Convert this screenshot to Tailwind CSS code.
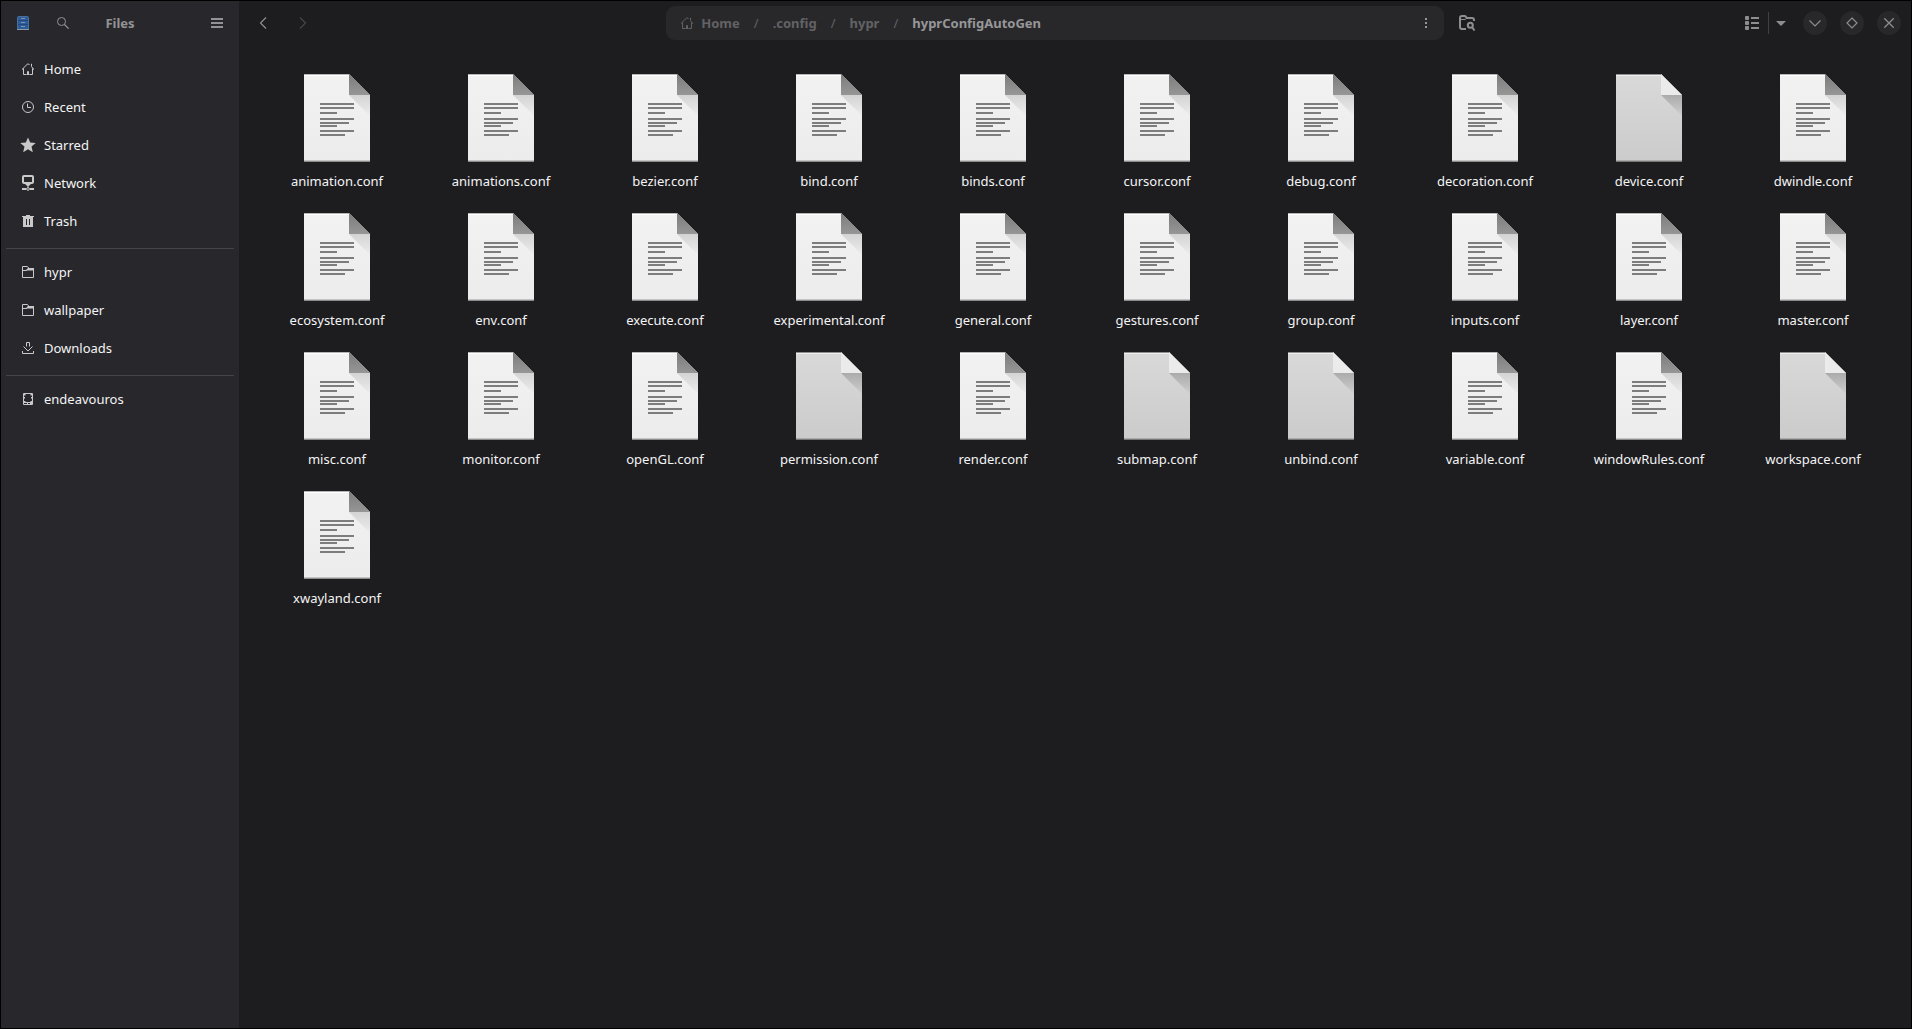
<!DOCTYPE html>
<html lang="en">
<head>
<meta charset="utf-8">
<title>Files</title>
<meta name="viewport" content="width=device-width, initial-scale=1">
<script src="https://cdn.jsdelivr.net/npm/@tailwindcss/browser@4"></script>
</head>
<body class="bg-[#1d1d20] font-['Noto_Sans',sans-serif] text-[13px] leading-5 text-white">

<svg class="absolute size-0" aria-hidden="true">
  <defs>
    <linearGradient id="paper" x1="0" y1="0" x2="0" y2="1"><stop offset="0" stop-color="#f2f2f2"/><stop offset="1" stop-color="#ececec"/></linearGradient>
    <linearGradient id="fold" x1="0" y1="0" x2="0" y2="1"><stop offset="0" stop-color="#7c7c7c"/><stop offset="1" stop-color="#969696"/></linearGradient>
    <linearGradient id="shade" x1="0" y1="0" x2="0" y2="1"><stop offset="0" stop-color="#000" stop-opacity=".12"/><stop offset="1" stop-color="#000" stop-opacity=".01"/></linearGradient>
    <linearGradient id="blank-paper" x1="0" y1="0" x2="0" y2="1"><stop offset="0" stop-color="#d9d9d9"/><stop offset="1" stop-color="#cbcbcb"/></linearGradient>
    <linearGradient id="blank-shade" x1="0" y1="0" x2="0" y2="1"><stop offset="0" stop-color="#000" stop-opacity=".2"/><stop offset="1" stop-color="#000" stop-opacity=".02"/></linearGradient>
    <symbol id="doc-text" viewBox="0 0 66 88">
      <path d="M0 0H45L66 21V88H0Z" fill="url(#paper)"/>
      <path d="M0 0H45V1H0Z" fill="#b5b5b5"/><path d="M0 1H45V2H0Z" fill="#fff"/>
      <path d="M0 86H66V87H0Z" fill="#c4c4c4"/><path d="M0 87H66V88H0Z" fill="#8c8c8c"/>
      <path d="M45 21H66V42Z" fill="url(#shade)"/>
      <path d="M45 0L66 21H45Z" fill="url(#fold)"/>
      <path d="M16 29h34v2H16zM16 33h34v2H16zM16 38h17v2H16zM16 44h34v2H16zM16 48h29v2H16zM16 51h17v2H16zM16 56h34v2H16zM16 60h25v2H16z" fill="#7d7d7d"/>
    </symbol>
    <symbol id="doc-blank" viewBox="0 0 66 88">
      <path d="M0 0H45L66 21V88H0Z" fill="url(#blank-paper)"/>
      <path d="M0 0H45V1H0Z" fill="#8e8e8e"/><path d="M0 1H45V2H0Z" fill="#efefef"/>
      <path d="M0 86H66V87H0Z" fill="#aaa"/><path d="M0 87H66V88H0Z" fill="#777"/>
      <path d="M45 21H66V42Z" fill="url(#blank-shade)"/>
      <path d="M45 0L66 21H45Z" fill="#ebebeb"/>
    </symbol>
    <symbol id="home" viewBox="0 0 12 12">
      <path d="M.3 6.3 5.2 1.2Q6 .5 6.8 1.2L7.6 2M9.5 .8V3.6L11.7 6.3M1.5 5.5V11.5H4.6M10.5 5.5V11.5H7.4M.3 6.3H1.5M10.5 6.3H11.7" fill="none" stroke="currentColor"/>
      <path d="M5 8.2h2V12H5z" fill="currentColor"/>
    </symbol>
    <symbol id="folder" viewBox="0 0 12 12">
      <path d="M.5 .5H5.5L7 2.5H11.5V11.5H.5Z" fill="none" stroke="currentColor"/>
      <path d="M0 4H4L6 2H12V4.5H5L4.5 5H0Z" fill="currentColor"/>
    </symbol>
  </defs>
</svg>

<div class="flex min-h-screen border border-black">
  <aside class="flex w-[238px] shrink-0 flex-col bg-[#28282c]">
    <header class="grid h-11 grid-cols-[1fr_auto_1fr] items-center px-[5px] text-[#939395]">
      <div class="flex gap-1.5">
        <button class="grid size-[34px] place-items-center" aria-label="Application menu">
          <svg class="h-3.5 w-3" viewBox="0 0 12 14"><rect x=".5" y=".5" width="11" height="13" rx="1" fill="#2d5c9b" stroke="#47709f"/><path d="M0 13.5H12" stroke="#8f9aa8"/><path d="M4 2.5H8M4 6.5H8M4 10.5H8" stroke="#7f92aa"/><path d="M1 4.5H11M1 8.5H11" stroke="#224a80"/></svg>
        </button>
        <button class="grid size-[34px] place-items-center" aria-label="Search">
          <svg class="size-3" viewBox="0 0 12 12" fill="none" stroke="currentColor"><circle cx="4.5" cy="4.5" r="4"/><path d="M7.5 7.5 11.7 11.7" stroke-width="1.2"/></svg>
        </button>
      </div>
      <h1 class="font-bold">Files</h1>
      <button class="grid size-[34px] place-items-center justify-self-end" aria-label="Main menu">
        <svg class="h-2.5 w-3" viewBox="0 0 12 10" fill="currentColor"><path d="M0 0h12v2H0zM0 4h12v2H0zM0 8h12v2H0z"/></svg>
      </button>
    </header>
    <nav class="flex flex-col pt-1.5 text-[#f4f4f5]" aria-label="Places">
      <a href="#" class="mb-0.5 flex h-9 items-center gap-2.5 px-[21px]"><svg class="size-3 text-[#c9c9ca]"><use href="#home"/></svg>Home</a>
      <a href="#" class="mb-0.5 flex h-9 items-center gap-2.5 px-[21px]"><svg class="size-3 text-[#c9c9ca]" viewBox="0 0 12 12" fill="none" stroke="currentColor"><circle cx="6" cy="6" r="5.5"/><path d="M5.5 2.5V6.5H9"/></svg>Recent</a>
      <a href="#" class="mb-0.5 flex h-9 items-center gap-2 pr-5 pl-[19px]"><svg class="size-4 text-[#c9c9ca]" viewBox="0 0 16 16" fill="currentColor"><path d="M8 .5 10.2 5.6 15.7 6 11.5 9.6 12.8 15.2 8 12.2 3.2 15.2 4.5 9.6 .3 6 5.8 5.6Z"/></svg>Starred</a>
      <a href="#" class="mb-0.5 flex h-9 items-center gap-2.5 px-[21px]"><svg class="h-4 w-3 text-[#c9c9ca]" viewBox="0 0 12 16"><rect x="1" y="1" width="10" height="7" rx="1" fill="none" stroke="currentColor" stroke-width="2"/><path d="M3 9H9L6.8 11H5.2ZM5.5 10h1v3h-1zM0 13h4.3v2H0zM7.7 13H12v2H7.7z" fill="currentColor"/><circle cx="6" cy="14" r="1.3" fill="none" stroke="currentColor"/></svg>Network</a>
      <a href="#" class="mb-0.5 flex h-9 items-center gap-2.5 px-[21px]"><svg class="size-3 text-[#c9c9ca]" viewBox="0 0 12 12" fill="currentColor" fill-rule="evenodd"><path d="M4 0H8V1H12V2H11V12H1V2H0V1H4ZM4 4V10H5V4ZM7 4V10H8V4Z"/></svg>Trash</a>
      <hr class="mx-[5px] mt-[7px] mb-[5px] border-[#454549]">
      <a href="#" class="mb-0.5 flex h-9 items-center gap-2.5 px-[21px]"><svg class="size-3 text-[#c9c9ca]"><use href="#folder"/></svg>hypr</a>
      <a href="#" class="mb-0.5 flex h-9 items-center gap-2.5 px-[21px]"><svg class="size-3 text-[#c9c9ca]"><use href="#folder"/></svg>wallpaper</a>
      <a href="#" class="mb-0.5 flex h-9 items-center gap-2.5 px-[21px]"><svg class="size-3 text-[#c9c9ca]" viewBox="0 0 12 12" fill="none" stroke="currentColor"><path d="M4.5 4.5V.5H7.5V4.5M1.5 4.5 6 9 10.5 4.5M.5 9V11.5H11.5V9"/></svg>Downloads</a>
      <hr class="mx-[5px] mt-[7px] mb-[5px] border-[#454549]">
      <a href="#" class="mb-0.5 flex h-9 items-center gap-2.5 px-[21px]"><svg class="size-3 text-[#c9c9ca]" viewBox="0 0 12 12"><path d="M1.5 .5H10.5V11.5H1.5ZM1 9.5H11" fill="none" stroke="currentColor"/><path d="M2 1h1.500v1.500H2zM8.500 1H10v1.500H8.500zM2 4h1v1.500H2zM9 4h1v1.500H9zM2 8h1.500v1.500H2zM8.500 8H10v1.500H8.500zM5 10h1v1.500H5zM8 10h2v1.500H8z" fill="currentColor"/></svg>endeavouros</a>
    </nav>
  </aside>

  <main class="flex min-w-0 flex-1 flex-col">
    <header class="flex h-11 items-center text-[#8e8e8f]">
      <div class="flex flex-1 items-center gap-1.5 pl-[7px]">
        <button class="grid size-[34px] place-items-center" aria-label="Back"><svg class="h-3 w-2" viewBox="0 0 8 12" fill="none" stroke="currentColor" stroke-width="1.200"><path d="M7 .5 1.500 6 7 11.500"/></svg></button>
        <button class="grid size-[34px] place-items-center text-[#464648]" aria-label="Forward" disabled><svg class="h-3 w-2" viewBox="0 0 8 12" fill="none" stroke="currentColor" stroke-width="1.200"><path d="M1 .5 6.500 6 1 11.500"/></svg></button>
      </div>
      <nav class="ml-[3px] flex h-[34px] w-[46.5%] items-center gap-3.5 rounded-[9px] bg-[#28282b] pr-3 pl-[15px] font-bold text-[#626264]" aria-label="Path">
        <a href="#" class="flex items-center gap-2"><svg class="size-3"><use href="#home"/></svg>Home</a>
        <span class="font-normal">/</span>
        <a href="#">.config</a>
        <span class="font-normal">/</span>
        <a href="#">hypr</a>
        <span class="font-normal">/</span>
        <a href="#" class="text-[#979799]">hyprConfigAutoGen</a>
        <button class="ml-auto grid h-6 w-3 place-items-center text-[#979799]" aria-label="Folder menu"><svg class="h-2.5 w-0.5" viewBox="0 0 2 10" fill="currentColor"><path d="M0 0h2v2H0zM0 4h2v2H0zM0 8h2v2H0z"/></svg></button>
      </nav>
      <button class="ml-1.5 grid size-[34px] place-items-center" aria-label="Search current folder">
        <svg class="size-4" viewBox="0 0 16 16" fill="none" stroke="currentColor" stroke-width="2"><path d="M7 14H3Q1 14 1 12V3Q1 1 3 1H6L8 3H13Q15 3 15 5V6"/><path d="M1.500 4.500H6L8 3" stroke-width="1"/><circle cx="11.300" cy="10.300" r="2.500"/><path d="M13 12 15.500 15.500"/></svg>
      </button>
      <div class="flex flex-1 items-center justify-end pr-2.5">
        <button class="grid h-[34px] w-8 place-items-center" aria-label="List view"><svg class="h-3.5 w-3.5" viewBox="0 0 14 14" fill="currentColor"><rect width="4" height="4" rx="1"/><rect y="5" width="4" height="4" rx="1"/><rect y="10" width="4" height="4" rx="1"/><path d="M6 1h8v2H6zM6 6h8v2H6zM6 11h8v2H6z"/></svg></button>
        <span class="h-[22px] w-px bg-[#404042]"></span>
        <button class="grid h-[34px] w-[23px] place-items-center" aria-label="View options"><svg class="h-[5px] w-2.5" viewBox="0 0 10 5" fill="currentColor"><path d="M0 0H10L5 5Z"/></svg></button>
        <div class="ml-[11px] flex gap-[13px]">
          <button class="grid size-6 place-items-center rounded-full bg-[#28282b]" aria-label="Minimize"><svg class="h-[7px] w-3" viewBox="0 0 12 7" fill="none" stroke="currentColor" stroke-width="1.200"><path d="M.5 .5 6 6 11.500 .5"/></svg></button>
          <button class="grid size-6 place-items-center rounded-full bg-[#28282b]" aria-label="Maximize"><svg class="size-3" viewBox="0 0 12 12" fill="none" stroke="currentColor" stroke-width="1.200"><path d="M6 1 11 6 6 11 1 6Z"/></svg></button>
          <button class="grid size-6 place-items-center rounded-full bg-[#28282b]" aria-label="Close"><svg class="size-2.5" viewBox="0 0 10 10" fill="none" stroke="currentColor" stroke-width="1.300"><path d="M.3 .3 9.700 9.700M9.700 .3 .3 9.700"/></svg></button>
        </div>
      </div>
    </header>
    <ul id="files" class="grid grid-cols-10 gap-y-[22px] px-4 pt-[29px] text-center text-[#f4f4f5]"></ul>
  </main>
</div>

<script>
  const blank = new Set(["device", "permission", "submap", "unbind", "workspace"]);
  const names = "animation animations bezier bind binds cursor debug decoration device dwindle ecosystem env execute experimental general gestures group inputs layer master misc monitor openGL permission render submap unbind variable windowRules workspace xwayland".split(" ");
  document.getElementById("files").innerHTML = names.map(name => `
    <li class="flex flex-col items-center gap-[9px]">
      <svg class="h-[88px] w-[66px]" aria-hidden="true"><use href="${blank.has(name) ? "#doc-blank" : "#doc-text"}"/></svg>
      <span>${name}.conf</span>
    </li>`).join("");
</script>
</body>
</html>
